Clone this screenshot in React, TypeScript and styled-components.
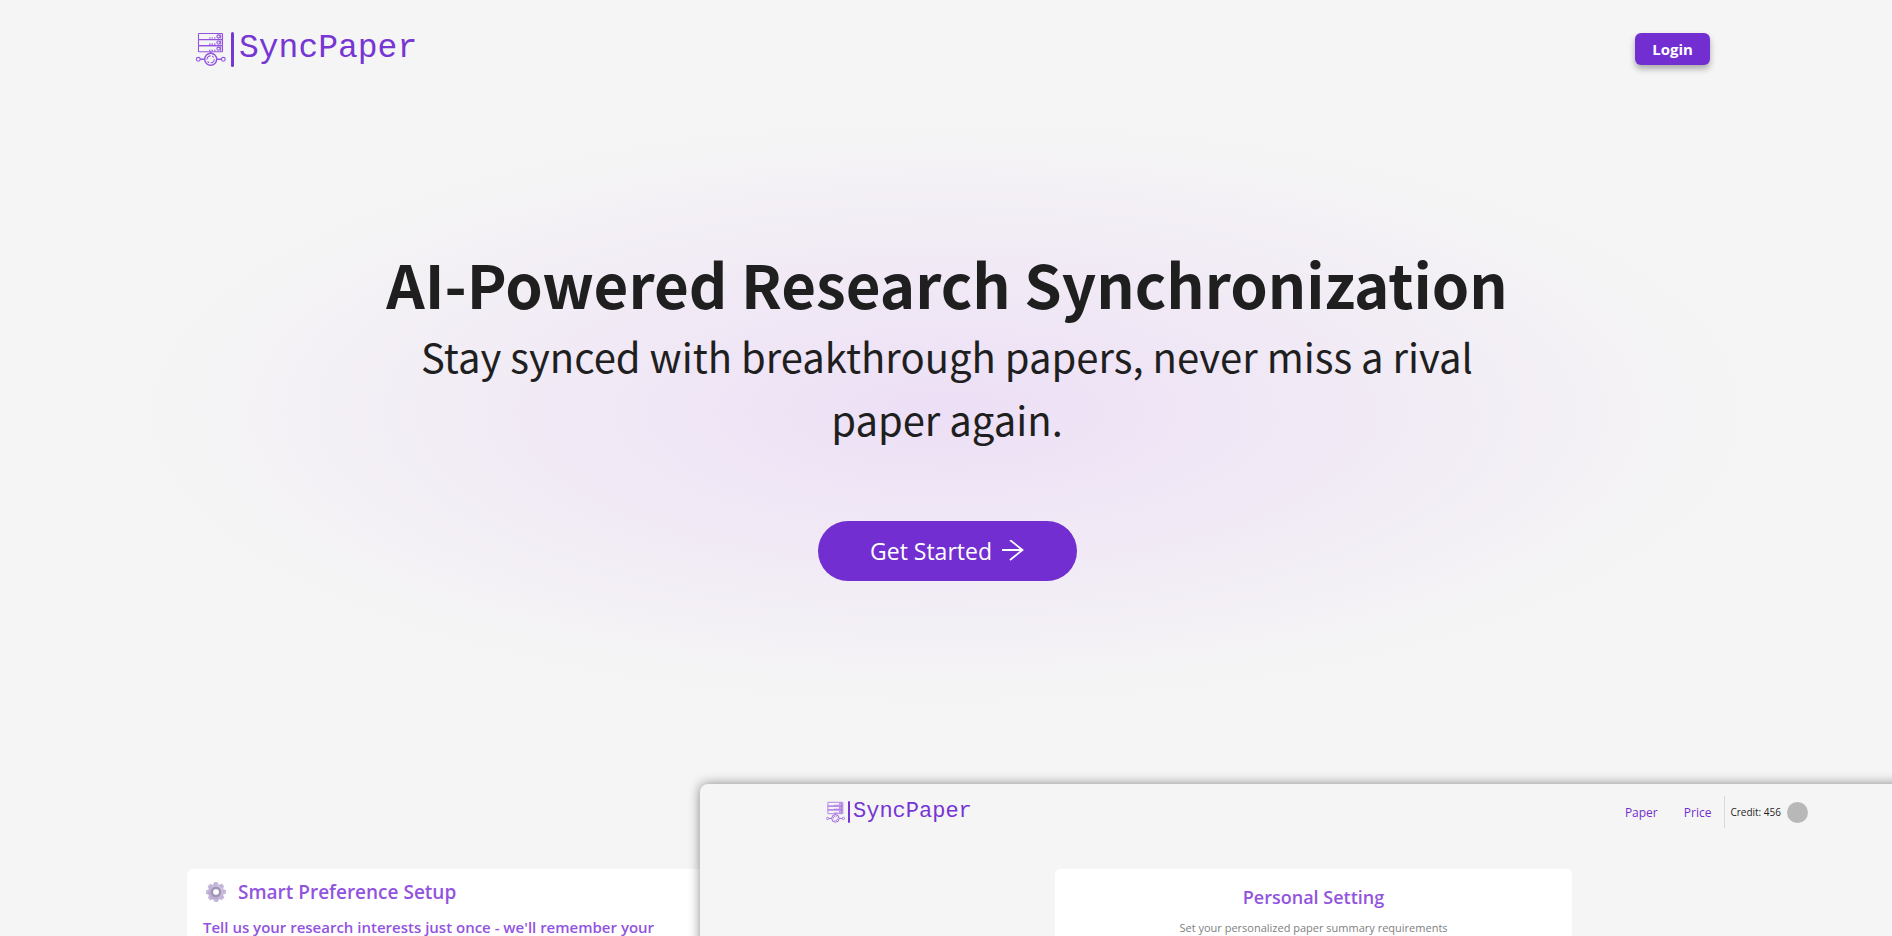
import React from "react";
import styled, { createGlobalStyle } from "styled-components";

const purple = "#722ed1";
const brandPurple = "#7636d3";
const violet = "#9254de";
const ui = `"Open Sans", "Noto Sans", sans-serif`;

const GlobalStyle = createGlobalStyle`
  * { box-sizing: border-box; }
  body { margin: 0; background: #f5f5f5; color: #1f1f1f; font-family: ${ui}; }
  h1, h2, p { margin: 0; }
`;

const Page = styled.div`
  height: 100vh;
  min-height: 600px;
  overflow: hidden;
  display: flex;
  flex-direction: column;
`;

const Header = styled.header`
  flex: none;
  display: flex;
  justify-content: space-between;
  align-items: center;
  height: 98px;
  padding: 0 182px 0 194px;
`;

const Brand = styled.a<{ $small?: boolean }>`
  display: flex;
  align-items: center;
  color: ${brandPurple};
  text-decoration: none;
  font: ${(p) => (p.$small ? "22px/28px" : "33px/40px")} "Liberation Mono", monospace;
  svg { width: ${(p) => (p.$small ? 20 : 32)}px; height: ${(p) => (p.$small ? 22 : 34)}px; }
`;

const BrandBar = styled.span<{ $small?: boolean }>`
  width: ${(p) => (p.$small ? 2 : 3)}px;
  height: ${(p) => (p.$small ? 22 : 35)}px;
  border-radius: 2px;
  background: ${brandPurple};
  margin: ${(p) => (p.$small ? "0 3px 0 3px" : "0 5px 0 5px")};
`;

const LoginButton = styled.button`
  height: 32px;
  width: 75px;
  border: 0;
  border-radius: 6px;
  background: ${purple};
  color: #fff;
  font: 700 15px/22px ${ui};
  box-shadow: 0 4px 6px rgba(0, 0, 0, 0.3);
`;

const Hero = styled.section`
  flex: none;
  display: flex;
  flex-direction: column;
  align-items: center;
  text-align: center;
  height: 628px;
  padding: 142px 0 0 2px;
  background: radial-gradient(ellipse 800px 290px at 50% 314px, #eddff6, #f5f5f5);
  font-family: "Noto Sans CJK SC", "Noto Sans", sans-serif;
`;

const Title = styled.h1`
  font-size: 60px;
  font-weight: 700;
  line-height: 86px;
`;

const Subtitle = styled.p`
  max-width: 1100px;
  margin-top: -1px;
  font-size: 40px;
  line-height: 63px;
`;

const StartButton = styled.button`
  display: flex;
  align-items: center;
  justify-content: center;
  gap: 10px;
  width: 259px;
  height: 60px;
  margin-top: 70px;
  border: 0;
  border-radius: 30px;
  background: ${purple};
  color: #fff;
  font: 23px/32px ${ui};
`;

const Features = styled.section`
  flex: 1;
  min-height: 0;
  display: grid;
  grid-template-columns: 187px 513px 1fr;
  grid-template-rows: 1fr;
  margin-top: 58px;
`;

const FeatureCard = styled.article`
  grid-column: 2;
  grid-row: 1;
  margin-top: 85px;
  padding: 8px 16px;
  border-radius: 6px 0 0 0;
  background: #fff;
  color: ${violet};
`;

const FeatureTitle = styled.h2`
  display: flex;
  align-items: center;
  gap: 11px;
  padding-left: 2px;
  font-size: 19px;
  font-weight: 600;
  line-height: 30px;
`;

const FeatureText = styled.p`
  margin-top: 8px;
  font-size: 15px;
  font-weight: 600;
  line-height: 24px;
  white-space: nowrap;
`;

const Preview = styled.div`
  grid-column: 3;
  grid-row: 1;
  margin-right: -24px;
  border-radius: 8px 0 0 0;
  background: #f5f5f5;
  box-shadow: 0 0 12px rgba(0, 0, 0, 0.45);
`;

const PreviewHeader = styled.div`
  display: flex;
  justify-content: space-between;
  align-items: center;
  height: 56px;
  padding: 0 108px 0 125px;
`;

const PreviewNav = styled.nav`
  display: flex;
  align-items: center;
  font-size: 12px;
  a { color: ${purple}; text-decoration: none; margin-right: 26px; }
  a + a { margin-right: 13px; }
`;

const Credit = styled.span`
  display: flex;
  align-items: center;
  gap: 6px;
  height: 32px;
  padding-left: 5px;
  border-left: 1px solid #d9d9d9;
  font-size: 10px;
`;

const Avatar = styled.span`
  width: 21px;
  height: 21px;
  border-radius: 50%;
  background: #b8b8b8;
`;

const PreviewCard = styled.div`
  width: 517px;
  height: 100%;
  margin: 29px 0 0 355px;
  padding-top: 13px;
  border-radius: 5px;
  background: #fff;
  text-align: center;
`;

const PreviewTitle = styled.h2`
  color: ${violet};
  font-size: 18px;
  font-weight: 600;
  line-height: 30px;
`;

const PreviewText = styled.p`
  margin-top: 6px;
  color: #808080;
  font-size: 11px;
  line-height: 20px;
`;

const ServerIcon = () => (
  <svg viewBox="0 0 32 34" fill="none" stroke={violet} strokeWidth="1.1" aria-hidden="true">
    {[1.5, 7.6, 13.7].map((y) => (
      <g key={y}>
        <rect x="4.500" y={y} width="24" height="6" rx="0.500" />
        <circle cx="24.500" cy={y + 3} r="1.600" />
        <path d={`M15 ${y + 4.5}h1.500M17.500 ${y + 4.5}h1.500M20 ${y + 4.5}h1.500`} />
        <path d={`M26.700 ${y + 1}v4`} />
      </g>
    ))}
    <path d="M16.700 19.700v1.800M6.200 27.300h4.300M23 27.300h4.300" strokeWidth="1.400" />
    <circle cx="16.700" cy="27.300" r="6" strokeWidth="1.400" />
    <circle cx="4.300" cy="27.300" r="1.900" />
    <circle cx="29.300" cy="27.300" r="1.900" />
    <path d="M13 27.500a3.600 3.600 0 0 1 3.600-3.600M20.300 27.200a3.600 3.600 0 0 1-3.600 3.600M18.200 23.800l1.500 1.700M13.600 29.300l1.500 1.500" />
  </svg>
);

const GearIcon = () => (
  <svg width="22" height="22" viewBox="-11 -11 22 22" aria-hidden="true">
    <defs>
      <linearGradient id="gear" x1="0" y1="1" x2="1" y2="0">
        <stop offset="0" stopColor="#b4a3cf" />
        <stop offset="1" stopColor="#d6cde4" />
      </linearGradient>
    </defs>
    <g fill="url(#gear)">
      <circle r="8" />
      {[0, 45, 90, 135, 180, 225, 270, 315].map((a) => (
        <path key={a} d="M-2.600-7L-1.900-10h3.800L2.600-7z" transform={`rotate(${a})`} />
      ))}
    </g>
    <circle r="4.200" fill="none" stroke="#a195b4" strokeWidth="2.400" />
    <circle r="2.800" fill="#fff" />
  </svg>
);

const ArrowIcon = () => (
  <svg width="22" height="22" viewBox="0 0 22 22" fill="none" stroke="#fff" strokeWidth="1.800" aria-hidden="true">
    <path d="M0 10h20M8 0l12.500 10L8 20" />
  </svg>
);

const Logo = ({ small }: { small?: boolean }) => (
  <Brand href="#" $small={small}>
    <ServerIcon />
    <BrandBar $small={small} />
    SyncPaper
  </Brand>
);

export default function App() {
  return (
    <Page>
      <GlobalStyle />
      <Header>
        <Logo />
        <LoginButton>Login</LoginButton>
      </Header>
      <Hero>
        <Title>AI-Powered Research Synchronization</Title>
        <Subtitle>Stay synced with breakthrough papers, never miss a rival paper again.</Subtitle>
        <StartButton>
          Get Started
          <ArrowIcon />
        </StartButton>
      </Hero>
      <Features>
        <FeatureCard>
          <FeatureTitle>
            <GearIcon />
            Smart Preference Setup
          </FeatureTitle>
          <FeatureText>Tell us your research interests just once - we'll remember your</FeatureText>
        </FeatureCard>
        <Preview>
          <PreviewHeader>
            <Logo small />
            <PreviewNav>
              <a href="#paper">Paper</a>
              <a href="#price">Price</a>
              <Credit>
                Credit: 456
                <Avatar />
              </Credit>
            </PreviewNav>
          </PreviewHeader>
          <PreviewCard>
            <PreviewTitle>Personal Setting</PreviewTitle>
            <PreviewText>Set your personalized paper summary requirements</PreviewText>
          </PreviewCard>
        </Preview>
      </Features>
    </Page>
  );
}
